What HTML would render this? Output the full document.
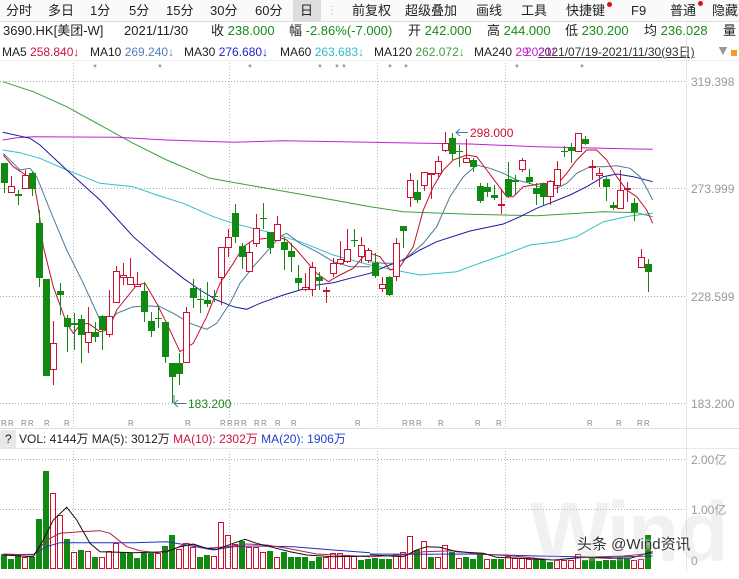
<!DOCTYPE html>
<html><head><meta charset="utf-8"><style>
*{margin:0;padding:0;box-sizing:border-box}
body{width:739px;height:571px;overflow:hidden;background:#fff;font-family:"Liberation Sans","Noto Sans CJK SC",sans-serif;position:relative;color:#222}
.t{position:absolute;white-space:nowrap;font-size:13px;line-height:16px}
.s{font-size:12px}
</style></head><body>
<div style="position:absolute;left:0;top:0;width:739px;height:22px;border-bottom:1px solid #ddd;background:#fafafa"></div>
<div style="position:absolute;left:293px;top:0;width:28px;height:22px;background:#ddd"></div>
<div class="t" style="left:6px;top:3px">分时</div>
<div class="t" style="left:48px;top:3px">多日</div>
<div class="t" style="left:90px;top:3px">1分</div>
<div class="t" style="left:129px;top:3px">5分</div>
<div class="t" style="left:166px;top:3px">15分</div>
<div class="t" style="left:210px;top:3px">30分</div>
<div class="t" style="left:255px;top:3px">60分</div>
<div class="t" style="left:300px;top:3px">日</div>
<div class="t" style="left:327px;top:3px;color:#aaa;font-size:10px">⋮</div>
<div class="t" style="left:352px;top:3px">前复权</div>
<div class="t" style="left:405px;top:3px">超级叠加</div>
<div class="t" style="left:476px;top:3px">画线</div>
<div class="t" style="left:521px;top:3px">工具</div>
<div class="t" style="left:566px;top:3px">快捷键</div>
<div style="position:absolute;left:607px;top:2px;width:5px;height:5px;border-radius:50%;background:#e01010"></div>
<div class="t" style="left:631px;top:3px">F9</div>
<div class="t" style="left:670px;top:3px">普通</div>
<div style="position:absolute;left:698px;top:1px;width:5px;height:5px;border-radius:50%;background:#e01010"></div>
<div class="t" style="left:712px;top:3px">隐藏</div>

<div class="t" style="left:3px;top:23px">3690.HK[美团-W]</div>
<div class="t" style="left:124px;top:23px">2021/11/30</div>
<div class="t" style="left:211px;top:23px">收 <span style="color:#1a8a1a">238.000</span></div>
<div class="t" style="left:289px;top:23px">幅 <span style="color:#1a8a1a">-2.86%(-7.000)</span></div>
<div class="t" style="left:408px;top:23px">开 <span style="color:#1a8a1a">242.000</span></div>
<div class="t" style="left:487px;top:23px">高 <span style="color:#1a8a1a">244.000</span></div>
<div class="t" style="left:565px;top:23px">低 <span style="color:#1a8a1a">230.200</span></div>
<div class="t" style="left:644px;top:23px">均 <span style="color:#1a8a1a">236.028</span></div>
<div class="t" style="left:723px;top:23px">量</div>

<div class="t s" style="left:2px;top:44px">MA5 <span style="color:#d01040">258.840↓</span></div>
<div class="t s" style="left:90px;top:44px">MA10 <span style="color:#5080b8">269.240↓</span></div>
<div class="t s" style="left:184px;top:44px">MA30 <span style="color:#2020d0">276.680↓</span></div>
<div class="t s" style="left:280px;top:44px">MA60 <span style="color:#30b8c8">263.683↓</span></div>
<div class="t s" style="left:374px;top:44px">MA120 <span style="color:#40a040">262.072↓</span></div>
<div class="t s" style="left:474px;top:44px">MA240 <span style="color:#c020d0">29</span></div>
<div class="t s" style="left:538px;top:44px;text-decoration:underline;color:#333">2021/07/19-2021/11/30(93日)</div>
<div class="t s" style="left:525px;top:44px;color:#c020d0">2021/</div>
<div class="t" style="left:716px;top:42px;color:#999;font-size:14px">▼</div>
<div style="position:absolute;left:731px;top:50px;width:6px;height:6px;background:#f0a020"></div>

<svg width="739" height="571" style="position:absolute;left:0;top:0" id="sv" xmlns="http://www.w3.org/2000/svg"></svg>

<div class="t s" style="left:691px;top:74px;color:#999">319.398</div>
<div class="t s" style="left:691px;top:181px;color:#999">273.999</div>
<div class="t s" style="left:691px;top:289px;color:#999">228.599</div>
<div class="t s" style="left:691px;top:396px;color:#999">183.200</div>
<div class="t s" style="left:691px;top:452px;color:#999">2.00亿</div>
<div class="t s" style="left:691px;top:502px;color:#999">1.00亿</div>
<div class="t s" style="left:691px;top:553px;color:#999">0</div>
<div class="t s" style="left:188px;top:396px;color:#1a8a1a">183.200</div>
<div class="t s" style="left:470px;top:125px;color:#d01030">298.000</div>

<div style="position:absolute;left:0;top:430px;width:16px;height:18px;background:#e8e8e8"></div>
<div class="t s" style="left:5px;top:431px">?</div>
<div class="t s" style="left:19px;top:431px">VOL: 4144万 MA(5): 3012万 <span style="color:#d01040">MA(10): 2302万</span> <span style="color:#2040d0">MA(20): 1906万</span></div>
<div class="t" style="left:530px;top:490px;font-size:84px;line-height:84px;font-weight:bold;color:rgba(200,200,200,0.25);letter-spacing:-2px">Wind</div>
<div class="t" style="left:577px;top:537px;font-size:15px;color:#333;text-shadow:0 0 3px #fff,0 0 3px #fff">头条 @Wind资讯</div>

<script>
var sv=document.getElementById('sv');var h='';
function L(x1,y1,x2,y2,c,d){h+='<line x1="'+x1+'" y1="'+y1+'" x2="'+x2+'" y2="'+y2+'" stroke="'+c+'" stroke-width="1"'+(d?' stroke-dasharray="1,2"':'')+'/>';}
[81,188,296,403,459,509].forEach(function(y){L(0,y+.5,686,y+.5,'#aaa',1)});
[73,229,377,505].forEach(function(x){L(x+.5,60,x+.5,428,'#bbb',1);L(x+.5,448,x+.5,571,'#bbb',1)});
L(686.5,22,686.5,571,'#e4e4e4');L(0,428.5,739,428.5,'#e0e0e0');L(0,448.5,739,448.5,'#e8e8e8');L(0,60.5,739,60.5,'#eee');
[95,160,250,320,337,344,390,406,517,582].forEach(function(x){h+='<text x="'+x+'" y="71" font-size="10" fill="#777" text-anchor="middle">*</text>'});
[1,8,21,28,44,64,128,185,220,227,234,241,254,261,275,291,355,402,409,416,438,475,496,587,616,637,644].forEach(function(x){h+='<text x="'+x+'" y="426" font-size="8" fill="#888" font-family="Liberation Sans">R</text>'});
function P(arr,ox,oy,c,w){var s='';for(var i=0;i<arr.length;i+=2)s+=(ox+arr[i]/3).toFixed(1)+','+(oy+arr[i+1]/3).toFixed(1)+' ';h+='<polyline points="'+s+'" fill="none" stroke="'+c+'" stroke-width="'+(w||1)+'"/>';}
var R='#d01030',G='#108a10';
P([8,35,100,65,200,110,300,165,400,220,500,270,630,325,800,355,1000,390,1110,410],0,70,'#3aa03a');P([0,410,100,425,300,433,500,437,700,425,800,428,848,440],370,70,'#3aa03a');
P([8,210,50,203,100,200,350,202,500,210,700,217,850,212,1110,217],0,70,'#c020d0');P([0,217,300,222,500,230,700,235,848,238],370,70,'#c020d0');
P([8,240,60,248,120,265,200,300,300,340,400,350,470,375,550,400,640,440,700,460,800,485,900,515,1000,555,1110,585],0,70,'#30c0c8');P([0,585,100,605,150,615,260,605,300,590,400,555,480,525,560,515,620,500,700,455,780,438,848,430],370,70,'#30c0c8');
P([8,187,90,205,120,225,200,300,300,390,400,500,480,570,550,625,600,660,650,690,700,710,740,718,780,700,850,675,900,660,950,645,1000,638,1050,625,1110,610],0,70,'#1a1aa0');P([0,610,50,588,100,570,150,540,200,515,300,483,400,462,450,440,500,415,550,395,600,375,650,350,700,320,740,312,790,320,848,335],370,70,'#1a1aa0');
P([10,250,60,300,90,295,110,320,150,420,200,540,250,640,300,750,320,770,350,730,400,710,450,708,480,710,520,730,570,760,620,778,650,760,690,700,720,640,760,590,800,545,840,500,860,490,900,520,950,545,1000,575,1050,590,1110,590],0,70,'#4a7a98');P([0,575,40,580,80,580,120,555,160,520,200,470,240,380,280,320,320,285,360,295,400,310,440,330,480,340,520,355,560,355,590,340,620,310,660,290,700,290,740,287,780,295,810,320,830,355,848,390],370,70,'#4a7a98');
P([10,255,40,290,100,330,115,410,130,530,160,650,200,760,220,790,240,765,265,760,300,785,325,780,350,720,410,645,435,640,470,700,500,760,540,845,580,820,620,740,660,640,700,580,730,530,760,510,800,505,830,500,860,510,890,540,920,575,950,610,985,635,1020,615,1060,595,1090,560,1110,540],0,70,'#c01030');P([0,550,30,560,60,600,90,590,110,560,130,530,160,420,190,350,220,300,250,270,290,255,320,260,350,300,380,340,410,380,430,380,460,350,490,345,520,340,560,345,590,310,620,270,650,240,680,240,710,270,740,320,770,360,800,380,830,420,848,460],370,70,'#c01030');
var C=[['g',163,183,163,193],['r',186,192,176,193],['g',194,196,190,205],['r',175,188,170,189],['g',173,189,172,196],['g',223,278,210,287],['g',279,376,279,376],['r',343,369,321,385],['g',291,295,283,315],['g',318,327,315,352],['g',323,325,313,350],['g',319,335,315,363],['r',332,342,307,353],['g',332,337,322,342],['g',316,330,315,350],['r',316,334,290,337],['r',271,302,266,303],['r',275,277,263,285],['r',277,284,258,285],['r',284,286,272,287],['g',291,312,282,322],['g',321,331,312,337],['g',318,319,305,328],['g',322,357,322,363],['g',363,377,363,403],['g',363,374,353,385],['r',312,362,307,362],['g',288,298,279,308],['g',299,300,288,313],['g',300,304,282,307],['g',296,297,290,302],['r',247,277,247,305],['r',237,247,229,257],['g',213,237,204,243],['g',246,257,243,269],['r',252,271,243,272],['r',228,243,214,247],['g',218,219,203,229],['g',232,248,232,254],['r',224,240,216,241],['g',242,250,237,270],['g',251,257,243,272],['g',278,283,265,290],['r',287,289,273,291],['r',267,289,262,296],['g',277,281,272,290],['r',290,291,287,303],['r',263,273,258,277],['r',259,263,241,265],['r',249,261,229,263],['g',240,241,229,247],['r',245,256,237,263],['r',250,260,248,263],['g',263,276,253,278],['r',284,288,277,292],['g',277,295,276,296],['r',243,276,238,281],['g',226,231,226,248],['r',180,197,173,207],['g',192,200,180,203],['r',172,185,172,191],['r',173,174,173,199],['r',161,173,156,177],['r',143,150,132,152],['g',138,154,133,160],['g',151,152,145,167],['r',158,162,139,163],['g',160,167,158,172],['g',186,201,183,203],['g',187,192,183,197],['g',195,198,185,200],['r',204,205,190,214],['g',179,196,162,198],['g',180,182,175,195],['r',160,169,158,172],['g',177,182,169,184],['g',188,194,183,205],['g',184,197,183,205],['r',181,196,180,205],['r',169,185,161,193],['g',151,152,146,157],['g',147,151,143,163],['r',133,151,133,152],['g',139,144,136,145],['r',166,167,160,180],['r',173,175,168,187],['g',179,187,177,201],['g',205,208,202,210],['r',190,208,170,209],['r',188,189,182,202],['g',203,212,198,221],['r',257,267,249,267],['g',264,272,259,292]];
var V=[['g',554],['g',559],['g',554],['r',557],['g',557],['g',519],['g',471],['r',493],['r',515],['g',539],['r',552],['g',550],['r',551],['g',557],['r',557],['r',551],['r',543],['g',552],['g',553],['g',558],['g',553],['g',553],['r',553],['g',546],['g',535],['r',549],['r',543],['r',547],['g',557],['g',555],['r',556],['r',522],['r',535],['r',544],['g',541],['r',547],['r',547],['r',552],['g',551],['r',557],['g',552],['g',557],['g',557],['g',557],['g',561],['g',557],['r',557],['r',553],['r',553],['r',555],['r',556],['g',560],['g',559],['g',558],['g',559],['g',559],['r',554],['r',552],['r',536],['g',550],['r',541],['g',557],['r',557],['r',545],['g',552],['r',558],['g',557],['g',559],['g',553],['r',559],['g',559],['g',559],['r',556],['r',558],['r',558],['r',559],['g',559],['g',559],['g',562],['r',560],['r',560],['r',560],['r',554],['g',560],['g',558],['g',561],['g',560],['g',560],['g',557],['g',559],['r',560],['r',559],['g',535]];
for(var i=0;i<C.length;i++){var c=C[i],x=4+7*i,col=c[0]=='r'?R:G;
L(x+.5,c[3],x+.5,c[1],col);L(x+.5,c[2],x+.5,c[4],col);
var hh=Math.max(1,c[2]-c[1]);
if(c[0]=='r')h+='<rect x="'+(x-2.5)+'" y="'+(c[1]+.5)+'" width="6" height="'+hh+'" fill="#fff" stroke="'+R+'"/>';
else h+='<rect x="'+(x-3)+'" y="'+c[1]+'" width="7" height="'+hh+'" fill="'+G+'"/>';}
for(var i=0;i<V.length;i++){var v=V[i],x=4+7*i;
if(v[0]=='r')h+='<rect x="'+(x-2.5)+'" y="'+(v[1]+.5)+'" width="5" height="'+(568-v[1])+'" fill="none" stroke="'+R+'"/>';
else h+='<rect x="'+(x-3)+'" y="'+v[1]+'" width="6" height="'+(569-v[1])+'" fill="'+G+'"/>';}
P([10,465,100,463,140,440,180,428,300,428,400,428,500,425,560,435,640,450,700,440,760,438,880,440,1000,450,1110,458],0,400,'#2030c0');P([0,462,150,463,300,462,500,468,700,472,848,468],370,400,'#2030c0');
P([10,462,100,465,140,420,180,400,240,395,300,392,330,400,380,440,420,452,470,458,520,448,560,430,620,445,680,440,740,432,800,435,860,445,950,462,1110,470],0,400,'#b02050');P([0,470,100,465,160,455,250,452,330,462,430,468,550,480,650,472,760,468,848,460],370,400,'#b02050');
P([10,465,100,470,130,420,160,360,200,322,230,360,270,430,300,455,400,458,500,455,540,440,580,432,620,445,650,448,700,430,735,418,770,430,810,440,870,455,920,465,1000,470,1110,468],0,400,'#111');P([0,465,100,470,140,450,170,440,210,442,260,455,340,460,380,472,450,475,550,480,640,472,720,475,780,475,848,455],370,400,'#111');
L(174,403.5,186,403.5,'#4a7a98');L(174,395,174,403,'#4a7a98');h+='<polyline points="178,400 174,403.5 178,407" fill="none" stroke="#4a7a98"/>';
L(456,132.5,468,132.5,'#4a7a98');h+='<polyline points="460,129 456,132.5 460,136" fill="none" stroke="#4a7a98"/>';
sv.innerHTML=h;
</script>
</body></html>
